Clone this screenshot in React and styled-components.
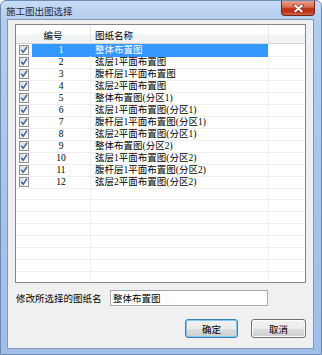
import React from 'react';
import styled, { createGlobalStyle } from 'styled-components';

const Global = createGlobalStyle`
  html, body {
    margin: 0;
    padding: 0;
    background: #ffffff;
  }
  * {
    box-sizing: border-box;
  }
`;

const cjk = `"Liberation Serif", "Noto Sans CJK SC", serif`;

const Window = styled.div`
  width: 322px;
  height: 355px;
  display: flex;
  flex-direction: column;
  padding: 0 7px 5px 6px;
  background: linear-gradient(to bottom, #c6dbf3 0px, #b3cdee 20px, #a6c4ea 60%, #9fbfe8 100%);
  border: 1px solid #6d8ab0;
  border-radius: 6px 6px 0 0;
  font-family: ${cjk};
  font-size: 9.5px;
  color: #000;
  overflow: hidden;
`;

const TitleBar = styled.div`
  height: 19px;
  display: flex;
  justify-content: space-between;
  align-items: flex-start;
`;

const Title = styled.span`
  margin-top: 5px;
  margin-left: -1px;
  line-height: 10px;
  color: #1b2b44;
  font-family: "Noto Sans CJK SC", sans-serif;
`;

const CloseButton = styled.div`
  flex: none;
  width: 34px;
  height: 15px;
  margin-right: -1px;
  display: flex;
  align-items: center;
  justify-content: center;
  border: 1px solid #6e2417;
  border-top: none;
  border-radius: 0 0 4px 4px;
  background: linear-gradient(to bottom, #e8a08c 0%, #d9694f 45%, #c2361a 52%, #bd3318 75%, #d76446 100%);
`;

const Client = styled.div`
  flex: 1;
  display: flex;
  flex-direction: column;
  padding: 4px 7px 10px 7px;
  background: #f0f0f0;
  border: 1px solid #8198b6;
`;

const ListView = styled.div`
  height: 259px;
  border: 1px solid #828790;
  background: #fff;
  overflow: hidden;
`;

const HeaderRow = styled.div`
  height: 19px;
  display: grid;
  grid-template-columns: 75px 178px 1fr;
  background: linear-gradient(to bottom, #ffffff 0%, #ffffff 45%, #f3f4f6 55%, #f1f2f4 100%);
  border-bottom: 1px solid #d5d5d5;
`;

const HeadCell = styled.div`
  display: flex;
  align-items: center;
  justify-content: ${p => (p.$center ? 'center' : 'flex-start')};
  padding-left: ${p => (p.$center ? '0' : '4px')};
  padding-top: 1px;
  border-right: ${p => (p.$last ? 'none' : '1px solid #e3e5e9')};
  font-family: "Noto Sans CJK SC", sans-serif;
`;

const Row = styled.div`
  height: 12px;
  display: grid;
  grid-template-columns: 16px 59px 178px 1fr;
  line-height: 12px;
`;

const CheckCell = styled.div`
  display: flex;
  align-items: center;
  justify-content: flex-end;
  padding-right: 3px;
  border-bottom: 1px solid #f0f0f0;
`;

const NumCell = styled.div`
  text-align: center;
  border-right: 1px solid ${p => (p.$selected ? '#3399ff' : '#f0f0f0')};
  border-bottom: 1px solid ${p => (p.$selected ? '#3399ff' : '#f0f0f0')};
  background: ${p => (p.$selected ? '#3399ff' : 'transparent')};
  color: ${p => (p.$selected ? '#fff' : '#000')};
  white-space: nowrap;
`;

const NameCell = styled.div`
  padding-left: 4px;
  border-right: 1px solid #f0f0f0;
  border-bottom: 1px solid ${p => (p.$selected ? '#3399ff' : '#f0f0f0')};
  background: ${p => (p.$selected ? '#3399ff' : 'transparent')};
  color: ${p => (p.$selected ? '#fff' : '#000')};
  white-space: nowrap;
  overflow: hidden;
`;

const FillCell = styled.div`
  border-bottom: 1px solid #f0f0f0;
`;

const EditRow = styled.div`
  margin-top: 7px;
  height: 16px;
  display: flex;
  align-items: center;
`;

const Label = styled.span`
  width: 95px;
  padding-left: 1px;
  font-family: "Noto Sans CJK SC", sans-serif;
`;

const TextBox = styled.div`
  width: 158px;
  height: 16px;
  padding-left: 2px;
  line-height: 14px;
  background: #fff;
  border: 1px solid #abadb3;
  border-top-color: #a3a6ad;
  font-family: "Noto Sans CJK SC", sans-serif;
`;

const ButtonRow = styled.div`
  margin-top: 13px;
  display: flex;
  justify-content: flex-end;
  gap: 13px;
`;

const Button = styled.div`
  width: ${p => p.$w}px;
  height: 19px;
  display: flex;
  align-items: center;
  justify-content: center;
  border: 1px solid ${p => (p.$default ? '#3c7fb1' : '#707070')};
  border-radius: 3px;
  background: linear-gradient(to bottom, #f2f2f2 0%, #ebebeb 50%, #dddddd 51%, #cfcfcf 100%);
  box-shadow: inset 0 0 0 1px ${p => (p.$default ? '#7ec8ef' : '#fcfcfc')};
  font-family: "Noto Sans CJK SC", sans-serif;
`;

const CheckBox = () => (
  <svg width="10" height="10" viewBox="0 0 10 10">
    <defs>
      <linearGradient id="cbg" x1="0" y1="0" x2="1" y2="1">
        <stop offset="0" stopColor="#d6d8db" />
        <stop offset="1" stopColor="#ffffff" />
      </linearGradient>
    </defs>
    <rect x="0.5" y="0.5" width="9" height="9" fill="url(#cbg)" stroke="#8e8f8f" />
    <path d="M2.3 4.8 L4.2 7.2 L7.9 1.8" fill="none" stroke="#4060a8" strokeWidth="1.5" />
  </svg>
);

const CloseIcon = () => (
  <svg width="11" height="9" viewBox="0 0 11 9">
    <path d="M1.5 1 L9.5 8 M9.5 1 L1.5 8" stroke="#5a1a10" strokeWidth="3" strokeLinecap="square" opacity="0.55" />
    <path d="M1.5 1 L9.5 8 M9.5 1 L1.5 8" stroke="#ffffff" strokeWidth="1.8" />
  </svg>
);

const drawings = [
  '整体布置图',
  '弦层1平面布置图',
  '腹杆层1平面布置图',
  '弦层2平面布置图',
  '整体布置图(分区1)',
  '弦层1平面布置图(分区1)',
  '腹杆层1平面布置图(分区1)',
  '弦层2平面布置图(分区1)',
  '整体布置图(分区2)',
  '弦层1平面布置图(分区2)',
  '腹杆层1平面布置图(分区2)',
  '弦层2平面布置图(分区2)',
];

export default function App() {
  const selected = 0;
  return (
    <Window>
      <Global />
      <TitleBar>
        <Title>施工图出图选择</Title>
        <CloseButton><CloseIcon /></CloseButton>
      </TitleBar>
      <Client>
        <ListView>
          <HeaderRow>
            <HeadCell $center>编号</HeadCell>
            <HeadCell>图纸名称</HeadCell>
            <HeadCell $last />
          </HeaderRow>
          {drawings.map((name, i) => (
            <Row key={i}>
              <CheckCell><CheckBox /></CheckCell>
              <NumCell $selected={i === selected}>{i + 1}</NumCell>
              <NameCell $selected={i === selected}>{name}</NameCell>
              <FillCell />
            </Row>
          ))}
          {Array.from({ length: 8 }).map((_, i) => (
            <Row key={'e' + i}>
              <FillCell />
              <NumCell />
              <NameCell />
              <FillCell />
            </Row>
          ))}
        </ListView>
        <EditRow>
          <Label>修改所选择的图纸名</Label>
          <TextBox>整体布置图</TextBox>
        </EditRow>
        <ButtonRow>
          <Button $w={53} $default>确定</Button>
          <Button $w={55}>取消</Button>
        </ButtonRow>
      </Client>
    </Window>
  );
}
